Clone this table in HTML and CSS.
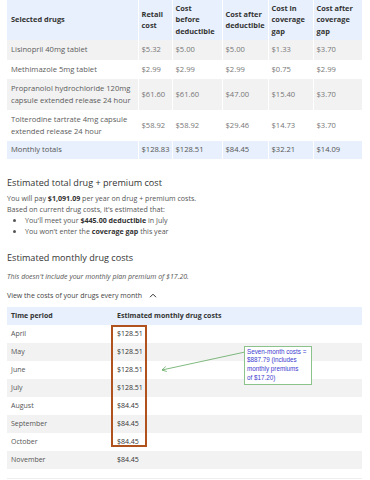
FILE: index.html
```html
<!DOCTYPE html>
<html lang="en">
<head>
  <meta charset="UTF-8" />
  <meta name="viewport" content="width=device-width, initial-scale=1.0"/>
  <title>Drug costs</title>
  <link rel="stylesheet" href="styles.css">
</head>
<body>
  <div class="page">
    <table class="drugs">
      <colgroup>
        <col style="width:131px"><col style="width:34px"><col style="width:50px">
        <col style="width:46px"><col style="width:45px"><col style="width:49px">
      </colgroup>
      <thead>
        <tr>
          <th>Selected drugs</th>
          <th>Retail<br>cost</th>
          <th>Cost<br>before<br>deductible</th>
          <th>Cost after<br>deductible</th>
          <th>Cost in<br>coverage<br>gap</th>
          <th>Cost after<br>coverage<br>gap</th>
        </tr>
      </thead>
      <tbody>
        <tr>
          <td>Lisinopril 40mg tablet</td>
          <td>$5.32</td><td>$5.00</td><td>$5.00</td><td>$1.33</td><td>$3.70</td>
        </tr>
        <tr>
          <td>Methimazole 5mg tablet</td>
          <td>$2.99</td><td>$2.99</td><td>$2.99</td><td>$0.75</td><td>$2.99</td>
        </tr>
        <tr>
          <td>Propranolol hydrochloride 120mg capsule extended release 24 hour</td>
          <td>$61.60</td><td>$61.60</td><td>$47.00</td><td>$15.40</td><td>$3.70</td>
        </tr>
        <tr>
          <td>Tolterodine tartrate 4mg capsule extended release 24 hour</td>
          <td>$58.92</td><td>$58.92</td><td>$29.46</td><td>$14.73</td><td>$3.70</td>
        </tr>
        <tr class="totals">
          <td>Monthly totals</td>
          <td>$128.83</td><td>$128.51</td><td>$84.45</td><td>$32.21</td><td>$14.09</td>
        </tr>
      </tbody>
    </table>

    <h2>Estimated total drug + premium cost</h2>
    <p class="copy">You will pay <b>$1,091.09</b> per year on drug + premium costs.</p>
    <p class="copy">Based on current drug costs, it's estimated that:</p>
    <ul class="points">
      <li>You'll meet your <b>$445.00 deductible</b> in July</li>
      <li>You won't enter the <b>coverage gap</b> this year</li>
    </ul>

    <h2 class="second">Estimated monthly drug costs</h2>
    <p class="note">This doesn't include your monthly plan premium of $17.20.</p>
    <p class="toggle">View the costs of your drugs every month
      <svg class="chev" width="8" height="5" viewBox="0 0 8 5"><path d="M1 4.2 L4 1.2 L7 4.2" fill="none" stroke="#333" stroke-width="1"/></svg>
    </p>

    <div class="monthly-wrap">
      <table class="monthly">
        <colgroup><col style="width:106px"><col></colgroup>
        <thead>
          <tr><th>Time period</th><th>Estimated monthly drug costs</th></tr>
        </thead>
        <tbody>
          <tr><td>April</td><td>$128.51</td></tr>
          <tr><td>May</td><td>$128.51</td></tr>
          <tr><td>June</td><td>$128.51</td></tr>
          <tr><td>July</td><td>$128.51</td></tr>
          <tr><td>August</td><td>$84.45</td></tr>
          <tr><td>September</td><td>$84.45</td></tr>
          <tr><td>October</td><td>$84.45</td></tr>
          <tr><td>November</td><td>$84.45</td></tr>
        </tbody>
      </table>

      <div class="highlight"></div>
      <svg class="arrow" width="95" height="30" viewBox="0 0 95 30">
        <g fill="none" stroke="#5fa85f" stroke-width="0.8">
          <line x1="5" y1="23" x2="88" y2="5"/>
          <polyline points="9.8,24.5 5,23 8.7,19.6"/>
        </g>
      </svg>
      <div class="callout">Seven-month costs =<br>$887.79 (includes<br>monthly premiums<br>of $17.20)</div>
    </div>
    <div class="rule"></div>
  </div>
</body>
</html>
```

FILE: styles.css
```css
body {
  margin: 0;
  background: #fff;
  font-family: "Open Sans", Arial, sans-serif;
  color: #555;
}

.page {
  padding: 0 7px;
}

table {
  border-collapse: collapse;
  table-layout: fixed;
  width: 355px;
}

.drugs th,
.drugs td {
  font-size: 7.6px;
  text-align: left;
  vertical-align: middle;
  padding: 4px 4px;
  border-left: 1px solid #fff;
}

.drugs th:first-child,
.drugs td:first-child {
  border-left: none;
}

.drugs th {
  background: #e7f0fc;
  color: #333;
  font-weight: 700;
  font-size: 7.4px;
  line-height: 11.3px;
  height: 34px;
  padding: 3px 3px;
  white-space: nowrap;
}

.drugs th:first-child {
  padding-left: 4px;
}

.drugs td {
  line-height: 11.5px;
  color: #5c5c5c;
}

.drugs td + td {
  color: #777;
  padding-left: 3px;
}

.drugs tbody tr:nth-child(odd) td {
  background: #f2f2f2;
}

.drugs tbody tr.totals td {
  background: #e7f0fc;
  color: #555;
  padding-top: 3px;
  padding-bottom: 3px;
}

h2 {
  margin: 17px 0 0;
  font-size: 9.1px;
  font-weight: 500;
  color: #333;
  line-height: 14px;
}

.copy {
  margin: 0;
  font-size: 7.1px;
  line-height: 11px;
}

.copy b,
.points b {
  color: #333;
}

.copy:first-of-type {
  margin-top: 3px;
}

.points {
  margin: 0;
  padding: 0 0 0 18px;
  font-size: 7.1px;
  line-height: 11px;
}

h2.second {
  margin-top: 14px;
}

.note {
  margin: 6px 0 0;
  font-size: 7px;
  font-style: italic;
  line-height: 11px;
}

.toggle {
  margin: 8px 0 0;
  font-size: 7px;
  line-height: 11px;
  color: #444;
}

.chev {
  margin-left: 5px;
  vertical-align: 0;
}

.monthly-wrap {
  position: relative;
  margin-top: 6px;
}

.monthly th,
.monthly td {
  font-size: 7px;
  text-align: left;
  padding: 0 4px;
  height: 18px;
}

.monthly th {
  background: #e7f0fc;
  color: #333;
  font-weight: 700;
}

.monthly td {
  color: #555;
}

.monthly tbody tr:nth-child(even) td {
  background: #f2f2f2;
}

.monthly td + td {
  color: #333;
}

.highlight {
  position: absolute;
  left: 104px;
  top: 18px;
  width: 32px;
  height: 118px;
  border: 2px solid #b0521d;
}

.arrow {
  position: absolute;
  left: 150px;
  top: 40px;
}

.callout {
  position: absolute;
  left: 237px;
  top: 39px;
  width: 62px;
  padding: 1px 2px 1px 2px;
  background: #fff;
  border: 1px solid #8cc28c;
  font-family: "Liberation Sans", Arial, sans-serif;
  font-size: 6.3px;
  line-height: 8.8px;
  color: #3b3bd0;
  white-space: nowrap;
}

.rule {
  margin-top: 9px;
  border-top: 1px solid #eee;
  width: 355px;
}
```
